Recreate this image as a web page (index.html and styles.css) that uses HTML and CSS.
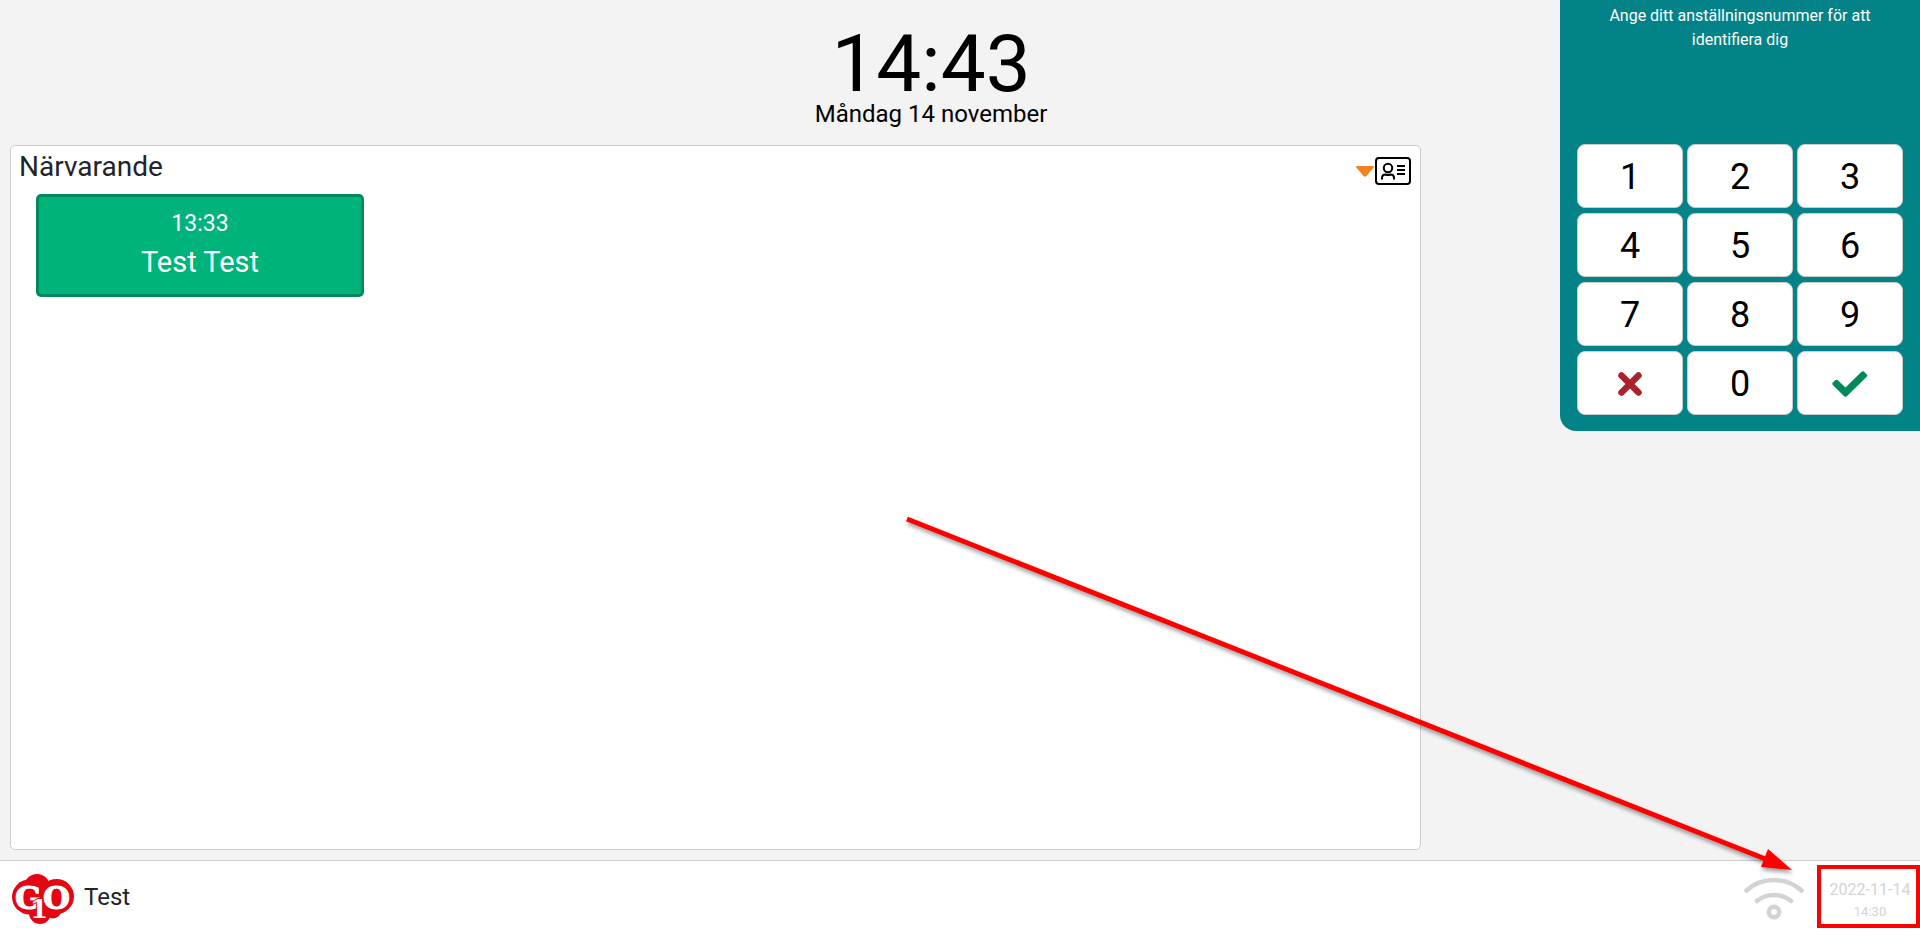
FILE: index.html
```html
<!DOCTYPE html>
<html lang="sv">
<head>
    <meta charset="UTF-8">
    <meta name="viewport" content="width=device-width, initial-scale=1.0">
    <title>Stämpelklocka</title>
    <link rel="stylesheet" href="styles.css">
</head>
<body>
    <div class="content">
        <main class="main">
            <header class="clock">
                <div class="clock-time">14:43</div>
                <div class="clock-date">Måndag 14 november</div>
            </header>

            <section class="panel">
                <div class="panel-header">
                    <h1>Närvarande</h1>
                    <button type="button" class="view-btn" aria-label="Visa">
                        <svg class="caret" width="18" height="11" viewBox="0 0 18 11"><path d="M1 0H17Q18.500 .5 17.500 1.800L10.500 10Q9 11.500 7.500 10L.5 1.800Q-.5 .5 1 0Z" fill="#f58220"/></svg>
                        <svg width="36" height="28" viewBox="0 0 36 28" fill="none" stroke="#000" stroke-width="2">
                            <rect x="1" y="1" width="34" height="26" rx="3"/>
                            <circle cx="13" cy="11" r="4.200"/>
                            <path d="M7 22.500V21Q7 17.500 10.500 17.500Q13 18.500 15.500 17.500Q19 17.500 19 21V22.500M22 9H30M22 13H30M22 17H30"/>
                        </svg>
                    </button>
                </div>
                <div class="cards">
                    <button type="button" class="card">
                        <span class="card-time">13:33</span>
                        <span class="card-name">Test Test</span>
                    </button>
                </div>
            </section>
        </main>

        <aside class="keypad">
            <p>Ange ditt anställningsnummer för att identifiera dig</p>
            <div class="keys">
                <button type="button">1</button>
                <button type="button">2</button>
                <button type="button">3</button>
                <button type="button">4</button>
                <button type="button">5</button>
                <button type="button">6</button>
                <button type="button">7</button>
                <button type="button">8</button>
                <button type="button">9</button>
                <button type="button" aria-label="Avbryt">
                    <svg width="24" height="24" viewBox="0 0 24 24"><path d="M3.500 3.500L20.500 20.500M20.500 3.500L3.500 20.500" stroke="#a8232b" stroke-width="6.500" stroke-linecap="round"/></svg>
                </button>
                <button type="button">0</button>
                <button type="button" aria-label="OK">
                    <svg width="36" height="26" viewBox="0 0 36 26"><path d="M.8 11.500L3.200 9.200Q4.500 8.200 5.800 9.200L13.500 16.500L29.500 .8Q31 -.3 32.200 .8L34.800 3.400Q35.800 4.600 34.800 5.800L14.800 25.200Q13.500 26.300 12.200 25.200L.8 14Q-.2 12.800 .8 11.500Z" fill="#008a5c"/></svg>
                </button>
            </div>
        </aside>
    </div>

    <footer class="footer">
        <svg class="logo" width="62" height="52" viewBox="0 0 62 52">
            <g fill="#e30613">
                <circle cx="17.500" cy="24" r="17.500"/>
                <circle cx="44.500" cy="23.500" r="17.500"/>
                <circle cx="25" cy="14" r="13"/>
                <circle cx="28" cy="40" r="11"/>
                <circle cx="41" cy="37" r="8.500"/>
            </g>
            <g fill="#fff" stroke="#fff" class="logo-text">
                <text x="3" y="36" font-size="31">G</text>
                <text x="31" y="36" font-size="31">O</text>
                <text x="18" y="45" font-size="26" class="logo-one">1</text>
            </g>
        </svg>
        <span class="company">Test</span>
        <svg class="wifi" width="60" height="44" viewBox="0 0 60 44" fill="none" stroke="#d3d3d3" stroke-width="4.500" stroke-linecap="round">
            <path d="M2.500 13.500Q14 3 30 3T57.500 13.500"/>
            <path d="M13 24Q20 18 30 18T47 24"/>
            <circle cx="30" cy="35" r="5.200"/>
        </svg>
        <div class="sync">
            <div class="sync-date">2022-11-14</div>
            <div class="sync-time">14:30</div>
        </div>
    </footer>

    <!-- Arrow pointing at the last sync time -->
    <svg class="arrow" width="900" height="366" viewBox="0 0 900 366">
        <path d="M7 8L868 349" stroke="#f00" stroke-width="5"/>
        <path d="M868 338L892 359L861 356Z" fill="#f00"/>
    </svg>
</body>
</html>
```
FILE: styles.css
```css
* {
    box-sizing: border-box;
}

body {
    margin: 0;
    min-height: 100vh;
    display: flex;
    flex-direction: column;
    position: relative;
    font-family: Roboto, "Liberation Sans", sans-serif;
    background-color: #f3f3f3;
    color: #212529;
}

button {
    font-family: inherit;
    cursor: pointer;
}

.content {
    flex: 1;
    display: flex;
    align-items: flex-start;
}

.main {
    flex: 1;
    align-self: stretch;
    display: flex;
    flex-direction: column;
    padding: 0 139px 10px 10px;
}

/* Clock, centred a bit to the right of the panel */
.clock {
    height: 145px;
    padding: 26px 0 0 302px;
    margin: 0 -139px 0 -10px;
    text-align: center;
    color: #000;
}

.clock-time {
    font-size: 80px;
    line-height: 76px;
}

.clock-date {
    font-size: 24px;
    line-height: 24px;
}

.panel {
    flex: 1;
    background-color: #fff;
    border: 1px solid #ccc;
    border-radius: 5px;
}

.panel-header {
    display: flex;
    justify-content: space-between;
    padding: 0 9px 0 8px;
}

.panel-header h1 {
    margin: 0;
    font-size: 28px;
    line-height: 42px;
    font-weight: 400;
}

.view-btn {
    display: flex;
    align-items: center;
    gap: 1px;
    margin-top: 10px;
    height: 30px;
    padding: 0;
    border: none;
    background: none;
}

.cards {
    display: flex;
    padding: 6px 25px;
}

.card {
    width: 328px;
    height: 103px;
    display: flex;
    flex-direction: column;
    align-items: center;
    justify-content: center;
    gap: 2px;
    padding: 0 0 5px;
    border: 3px solid #008a5c;
    border-radius: 5px;
    background-color: #00b37a;
    color: #fff;
}

.card-time {
    font-size: 23px;
    line-height: 36px;
}

.card-name {
    font-size: 29px;
    line-height: 36px;
}

.keypad {
    width: 360px;
    padding: 4px 17px 16px;
    background-color: #038387;
    border-bottom-left-radius: 16px;
}

.keypad p {
    height: 140px;
    margin: 0;
    padding: 0 16px;
    font-size: 16px;
    line-height: 24px;
    text-align: center;
    color: #fff;
}

.keys {
    display: grid;
    grid-template-columns: repeat(3, 1fr);
    gap: 5px 4px;
}

.keys button {
    height: 64px;
    display: flex;
    align-items: center;
    justify-content: center;
    padding: 2px 0 0;
    font-size: 36px;
    color: #000;
    background-color: #fff;
    border: 1px solid #ccc;
    border-radius: 8px;
}

.footer {
    height: 77px;
    display: flex;
    align-items: center;
    padding-left: 12px;
    background-color: #fff;
    border-top: 1px solid #ccc;
}

.logo-text {
    font-family: "DejaVu Serif", serif;
    font-weight: 700;
}

.logo-one {
    stroke: #e30613;
    stroke-width: 2px;
    paint-order: stroke;
}

.company {
    margin: 0 0 4px 10px;
    font-size: 24px;
}

.wifi {
    margin: 0 13px 0 auto;
}

.sync {
    width: 103px;
    height: 63px;
    margin-bottom: 6px;
    padding: 9px 0 0 3px;
    border: 4px solid #f00;
    text-align: center;
    color: #d3d3d3;
}

.sync-date {
    font-size: 16px;
    line-height: 24px;
}

.sync-time {
    font-size: 13px;
    line-height: 20px;
}

.arrow {
    position: absolute;
    right: 120px;
    bottom: 60px;
    pointer-events: none;
    filter: drop-shadow(1px 3px 2px rgba(0,0,0,0.4));
}
```
